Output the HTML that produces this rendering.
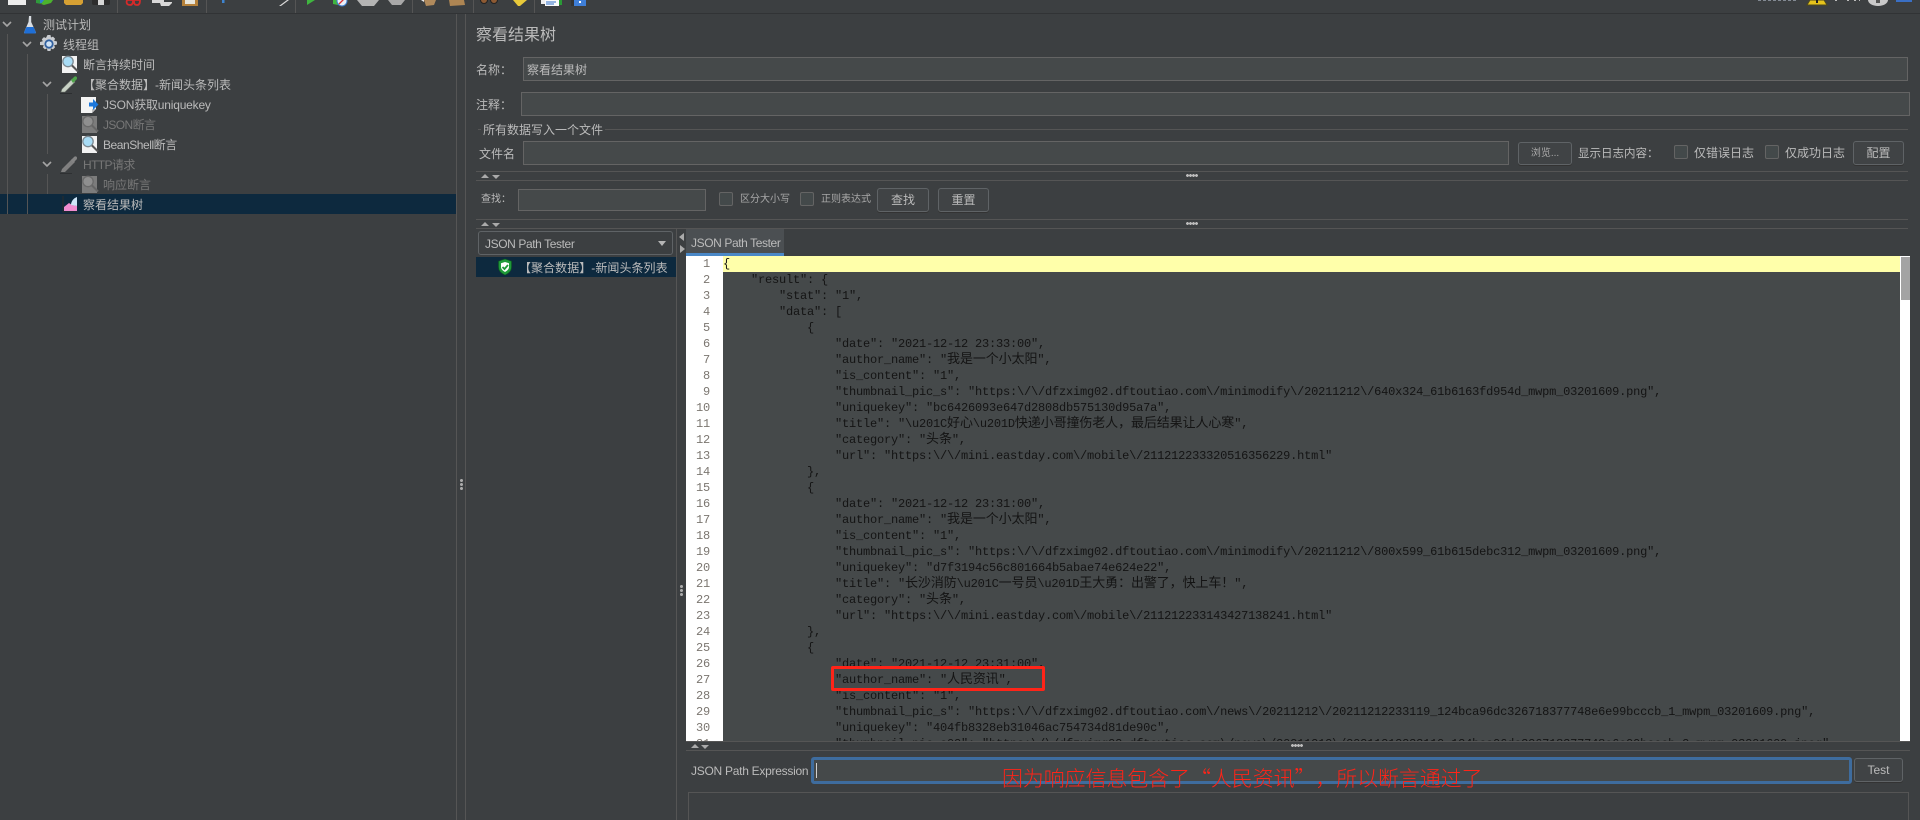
<!DOCTYPE html>
<html lang="zh-CN">
<head>
<meta charset="utf-8">
<title>察看结果树</title>
<style>
*{box-sizing:border-box}
html,body{margin:0;padding:0;width:1920px;height:820px;overflow:hidden;background:#3c3f41}
body{position:relative;font-family:"Liberation Sans","Noto Sans CJK SC",sans-serif;font-size:12px;color:#bbb;text-spacing-trim:space-all}
.t{position:absolute;white-space:nowrap;line-height:20px;height:20px;color:#bbb}
.d{color:#777}
.r{position:absolute}
.inp{position:absolute;background:#45494a;border:1px solid #646464}
.btn{position:absolute;background:#404345;border:1px solid #5f6366;border-radius:3px;box-shadow:0 1px 0 #333;color:#bbb;text-align:center;white-space:nowrap}
.cb{position:absolute;width:14px;height:14px;background:#43494a;border:1px solid #646464;border-radius:2px}
.line{position:absolute;height:1px;background:#555}
.vl{position:absolute;width:1px;background:#555}
.up,.dn{position:absolute;width:0;height:0;border-left:4px solid transparent;border-right:4px solid transparent}
.up{border-bottom:4px solid #aaa}
.dn{border-top:4px solid #aaa}
.dots{position:absolute;width:8px;height:3px;background:radial-gradient(circle at 1.5px 1.5px,#bbb 1.4px,transparent 1.5px) 0 0/3px 3px repeat-x}
.vdots{position:absolute;width:3px;height:11px;background:radial-gradient(circle at 1.5px 1.5px,#aaa 1.4px,transparent 1.6px) 0 0/4px 4px repeat-y}
svg{position:absolute;overflow:visible}
#gut{position:absolute;left:686px;top:256px;width:37px;height:485px;background:#fff;overflow:hidden;margin:0;padding:0 13px 0 0;text-align:right;font:12px/16px "Liberation Mono",monospace;letter-spacing:-.2px;color:#7b7670}
#code{position:absolute;left:723px;top:256px;width:1177px;height:485px;background:#45494a;overflow:hidden;font:12px/16px "Liberation Mono","Noto Sans CJK SC",monospace;letter-spacing:-.2px;color:#141414}
#code div{height:16px;line-height:16px;white-space:pre;padding-left:0;overflow:visible}
#code i,#code2 i{font-style:normal;font-family:"Noto Sans CJK SC",sans-serif;font-size:13px;letter-spacing:-.1px;line-height:0}
#code .first{background:#ffffaa}
#box{position:absolute;left:831px;top:666px;width:214px;height:25px;border:3px solid #ff2418;border-radius:2px;background:#45494a;z-index:0}
#code2{position:absolute;left:723px;top:672px;height:16px;font:12px/16px "Liberation Mono",monospace;letter-spacing:-.2px;color:#141414;white-space:pre}
.nar{letter-spacing:-.4px}
</style>
</head>
<body>

<!-- toolbar -->
<div class="r" style="left:0;top:0;width:1920px;height:14px;background:#3c3f41;border-bottom:1px solid #313335"></div>
<div class="vl" style="left:117px;top:0;height:13px"></div>
<div class="vl" style="left:206px;top:0;height:13px"></div>
<div class="vl" style="left:295px;top:0;height:13px"></div>
<div class="vl" style="left:412px;top:0;height:13px"></div>
<div class="vl" style="left:473px;top:0;height:13px"></div>
<div class="vl" style="left:534px;top:0;height:13px"></div>
<svg style="left:0;top:0" width="600" height="8" viewBox="0 0 600 8">
<rect x="8" y="0" width="18" height="5" fill="#ececec"/>
<path d="M36 0h5v4l-5-1z" fill="#2f9a3c"/><rect x="40" y="0" width="5" height="3" fill="#2f7fd0"/><path d="M44 0h9l-2 3-7 2-3-1z" fill="#4cb32e"/>
<path d="M64 0h19v3l-2 2H66l-2-2z" fill="#d6a033"/>
<path d="M92 0h18v4l-1 1H93l-1-1z" fill="#2d2d2d"/><rect x="98" y="0" width="6" height="5" fill="#d6d6d6"/>
<path d="M127 0c-1 3 0 5 3 5s3-3 3-5zM134 0c0 3 0 5 3 5s3-3 3-5z" fill="none" stroke="#d42a2a" stroke-width="1.8"/>
<path d="M152 0h12v2h8v1l-3 3h-8l-1-3h-8z" fill="#d8d8d8"/>
<path d="M182 0h16v6h-16z" fill="#b5813a"/><rect x="185" y="0" width="10" height="4" fill="#e8e6dc"/>
<rect x="222" y="0" width="2.5" height="3" fill="#3e84d0"/>
<path d="M279 6l8-6h2l-8 6z" fill="#d9d9d9"/>
<path d="M307 0h8l-8 5z" fill="#3fb53f"/>
<path d="M333 0h5v5l-5-1z" fill="#3fb53f"/><circle cx="342" cy="1" r="5" fill="#e8eef8" stroke="#3b78c9"/><path d="M339 4l6-6" stroke="#d33" stroke-width="1.3"/>
<path d="M357 0h22l-5 6h-12z" fill="#b4b4b4"/>
<path d="M388 0h17l-4 5h-9z" fill="#a8a8a8"/>
<path d="M424 0h12l-2 5-8 1z" fill="#b08a5c"/><path d="M421 0l3 0 0 2z" fill="#eee"/>
<path d="M449 0h15l1 5-15 1z" fill="#ad8553"/>
<circle cx="484" cy="0" r="3.5" fill="#8d5a33" stroke="#222"/><circle cx="494" cy="0" r="3.5" fill="#8d5a33" stroke="#222"/>
<path d="M513 0h14l-7 6h-2z" fill="#e8c93a"/>
<path d="M541 0h4v4h-4z" fill="#eee"/><rect x="545" y="0" width="14" height="6" fill="#fafafa"/><path d="M546 2h10M546 4h8" stroke="#2e6fc8"/><rect x="559" y="0" width="3" height="5" fill="#2a9a36"/>
<rect x="571" y="0" width="4" height="6" fill="#333"/><rect x="574" y="0" width="12" height="6" fill="#3f7fd8"/><rect x="579" y="1" width="2" height="2" fill="#fff"/>
</svg>
<svg style="left:1720px;top:0" width="200" height="8" viewBox="0 0 200 8">
<path d="M38 0h40" stroke="#9aa2ad" stroke-width="1.6" stroke-dasharray="3 2"/>
<path d="M87 5l3-5h14l3 5z" fill="#e6c31c" stroke="#4f4a1c"/><rect x="96" y="0" width="2" height="3" fill="#222"/>
<path d="M115 0h2M127 0h2M134 0h2M139 0h1" stroke="#bbb" stroke-width="2"/>
<path d="M148 0h20a10 6 0 0 1-20 0z" fill="#c9c9c9"/><rect x="156" y="0" width="4" height="3" fill="#555"/>
<path d="M176 0h16v2h-16z" fill="#3a6fc4"/>
</svg>

<!-- tree -->
<div class="r" style="left:0;top:194px;width:456px;height:20px;background:#0d293e"></div>
<div class="vl" style="left:7px;top:34px;height:180px"></div>
<div class="vl" style="left:27px;top:54px;height:160px"></div>
<div class="vl" style="left:47px;top:94px;height:60px"></div>
<div class="vl" style="left:47px;top:174px;height:20px"></div>
<svg style="left:0;top:0" width="60" height="180" viewBox="0 0 60 180" fill="none" stroke="#a5a5a5" stroke-width="1.6">
<path d="M3 22l4 4 4-4M23 42l4 4 4-4M43 82l4 4 4-4M43 162l4 4 4-4"/>
</svg>
<div class="t" style="left:43px;top:15px;font-size:12px">测试计划</div>
<div class="t" style="left:63px;top:35px">线程组</div>
<div class="t" style="left:83px;top:55px">断言持续时间</div>
<div class="t" style="left:83px;top:75px">【聚合数据】-新闻头条列表</div>
<div class="t" style="left:103px;top:95px;letter-spacing:-.2px">JSON获取uniquekey</div>
<div class="t d" style="left:103px;top:115px;letter-spacing:-.6px">JSON断言</div>
<div class="t" style="left:103px;top:135px;letter-spacing:-.45px">BeanShell断言</div>
<div class="t d" style="left:83px;top:155px;letter-spacing:-.6px">HTTP请求</div>
<div class="t d" style="left:103px;top:175px">响应断言</div>
<div class="t" style="left:83px;top:195px">察看结果树</div>

<!-- flask -->
<svg style="left:23px;top:15px" width="14" height="19" viewBox="0 0 14 19">
<path d="M6 1h2.2v6l4.6 10c.3.8-.2 1.5-1 1.5H2.2c-.8 0-1.300-.7-1-1.500L5.500 7z" fill="#d8dde2"/>
<path d="M3.500 12h7l2.300 5c.3.8-.2 1.500-1 1.500H2.200c-.8 0-1.300-.7-1-1.500z" fill="#1f6fd6"/>
</svg>
<!-- gear -->
<svg style="left:40px;top:35px" width="18" height="18" viewBox="0 0 18 18">
<path d="M7.500 0h3l.5 2.500 2-.9 2.100 2.100-1 2 2.900.8v3l-2.900.7 1 2.100-2.100 2.100-2-1-.5 2.600h-3l-.6-2.600-2 1-2.100-2.100 1-2.100L0 10V7l2.800-.8-1-2 2.100-2.100 2 .9z" fill="#c9ccd0"/>
<circle cx="9" cy="9" r="4.600" fill="#2f5f9e"/><circle cx="9" cy="9" r="2.800" fill="#cfe2f5"/>
</svg>
<!-- magnifier docs -->
<svg style="left:61px;top:55px" width="18" height="19" viewBox="0 0 18 19">
<rect x="1" y="1" width="15" height="17" fill="#f2f2f2"/><circle cx="7" cy="6.500" r="5.200" fill="#a8dcf5" stroke="#7d8a92" stroke-width="1.300"/><path d="M11 10.500l6 6" stroke="#555" stroke-width="2"/>
</svg>
<svg style="left:81px;top:135px" width="18" height="19" viewBox="0 0 18 19">
<rect x="1" y="1" width="15" height="17" fill="#f2f2f2"/><circle cx="7" cy="6.500" r="5.200" fill="#a8dcf5" stroke="#7d8a92" stroke-width="1.300"/><path d="M11 10.500l6 6" stroke="#555" stroke-width="2"/>
</svg>
<svg style="left:81px;top:115px" width="18" height="19" viewBox="0 0 18 19">
<rect x="1" y="1" width="15" height="17" fill="#7c7c7c"/><circle cx="7" cy="6.500" r="5.200" fill="#8f8f8f" stroke="#6a6a6a" stroke-width="1.300"/><path d="M11 10.500l6 6" stroke="#666" stroke-width="2"/>
</svg>
<svg style="left:81px;top:175px" width="18" height="19" viewBox="0 0 18 19">
<rect x="1" y="1" width="15" height="17" fill="#7c7c7c"/><circle cx="7" cy="6.500" r="5.200" fill="#8f8f8f" stroke="#6a6a6a" stroke-width="1.300"/><path d="M11 10.500l6 6" stroke="#666" stroke-width="2"/>
</svg>
<!-- droppers -->
<svg style="left:60px;top:75px" width="20" height="19" viewBox="0 0 20 19">
<path d="M1 17l1-3L12 4l3 3L5 17z" fill="#c9d2c6" stroke="#6c756b" stroke-width=".6"/><path d="M11 5l3-3c1-1 3-1 3 1 0 1-.2 1.500-1 2l-3 3z" fill="#4fa54a"/><path d="M0 18.500h12" stroke="#2c2e30"/>
</svg>
<svg style="left:60px;top:155px" width="20" height="19" viewBox="0 0 20 19">
<path d="M1 17l1-3L12 4l3 3L5 17z" fill="#808080"/><path d="M11 5l3-3c1-1 3-1 3 1 0 1-.2 1.500-1 2l-3 3z" fill="#858585"/><path d="M0 18.500h12" stroke="#2e3032"/>
</svg>
<!-- JSON extractor -->
<svg style="left:80px;top:95px" width="20" height="19" viewBox="0 0 20 19">
<path d="M1 2h15v12l-4 4H1z" fill="#f4f4f4"/><path d="M12 18v-4h4z" fill="#bdbdbd"/><path d="M9 7.500h4V4l5.500 5.500L13 15v-3.500H9z" fill="#1d78dc"/>
</svg>
<!-- chart -->
<svg style="left:62px;top:196px" width="17" height="17" viewBox="0 0 17 17">
<path d="M1 0v16h15" fill="none" stroke="#2b2b2b"/><path d="M2 15V11l5-4 3 2 5 1v5z" fill="#f08cd0"/><path d="M9 9c0-4 3-7 6-8v9z" fill="#cfe6f8"/>
</svg>

<!-- main vertical splitters -->
<div class="vl" style="left:456px;top:14px;height:806px"></div>
<div class="vl" style="left:465px;top:14px;height:806px"></div>
<div class="vdots" style="left:460px;top:479px"></div>

<!-- header -->
<div class="t" style="left:476px;top:26px;font-size:16px">察看结果树</div>
<div class="t" style="left:476px;top:60px">名称：</div>
<div class="inp" style="left:523px;top:57px;width:1385px;height:24px"></div>
<div class="t" style="left:527px;top:60px">察看结果树</div>
<div class="t" style="left:476px;top:95px">注释：</div>
<div class="inp" style="left:521px;top:92px;width:1389px;height:24px"></div>

<div class="line" style="left:478px;top:129px;width:3px"></div>
<div class="t" style="left:483px;top:120px">所有数据写入一个文件</div>
<div class="line" style="left:605px;top:129px;width:1303px"></div>
<div class="t" style="left:479px;top:144px">文件名</div>
<div class="inp" style="left:523px;top:141px;width:986px;height:24px"></div>
<div class="btn" style="left:1518px;top:142px;width:54px;height:23px;font-size:10px;line-height:21px;color:#aaa">浏览...</div>
<div class="t" style="left:1578px;top:144px;font-size:11.500px">显示日志内容：</div>
<div class="cb" style="left:1674px;top:145px"></div>
<div class="t" style="left:1694px;top:143px">仅错误日志</div>
<div class="cb" style="left:1765px;top:145px"></div>
<div class="t" style="left:1785px;top:143px">仅成功日志</div>
<div class="btn" style="left:1853px;top:141px;width:51px;height:24px;line-height:22px">配置</div>

<!-- splitter 1 -->
<div class="line" style="left:476px;top:171px;width:1432px"></div>
<div class="line" style="left:476px;top:180px;width:1432px"></div>
<div class="up" style="left:481px;top:174px"></div>
<div class="dn" style="left:492px;top:175px"></div>
<div class="dots" style="left:1186px;top:174px;width:12px;height:4px"></div>

<!-- search -->
<div class="t" style="left:481px;top:190px;font-size:10px">查找：</div>
<div class="inp" style="left:518px;top:189px;width:188px;height:22px"></div>
<div class="cb" style="left:719px;top:192px"></div>
<div class="t" style="left:740px;top:190px;font-size:10px;color:#a8a8a8">区分大小写</div>
<div class="cb" style="left:800px;top:192px"></div>
<div class="t" style="left:821px;top:190px;font-size:10px;color:#a8a8a8">正则表达式</div>
<div class="btn" style="left:877px;top:188px;width:52px;height:24px;line-height:23px">查找</div>
<div class="btn" style="left:938px;top:188px;width:51px;height:24px;line-height:23px">重置</div>

<!-- splitter 2 -->
<div class="line" style="left:476px;top:219px;width:1432px"></div>
<div class="line" style="left:476px;top:228px;width:1432px"></div>
<div class="up" style="left:481px;top:222px"></div>
<div class="dn" style="left:492px;top:223px"></div>
<div class="dots" style="left:1186px;top:222px;width:12px;height:4px"></div>

<!-- left result pane -->
<div class="btn nar" style="left:478px;top:231px;width:195px;height:24px;box-shadow:none;text-align:left;padding-left:6px;line-height:24px;background:#3c3f41">JSON Path Tester</div>
<div class="r" style="left:658px;top:241px;width:0;height:0;border-left:4.500px solid transparent;border-right:4.500px solid transparent;border-top:5px solid #b5b5b5"></div>
<div class="r" style="left:476px;top:257px;width:200px;height:20px;background:#0d293e"></div>
<svg style="left:498px;top:259px" width="14" height="16" viewBox="0 0 14 16">
<path d="M7 0l6.500 2.200V8c0 4-3 6.500-6.500 8C3.500 14.500.5 12 .5 8V2.200z" fill="#1f9a3a" stroke="#0e5a20" stroke-width=".6"/>
<path d="M7 3l4 1.300V8c0 2.200-2 3.800-4 5-2-1.200-4-2.800-4-5V4.300z" fill="#fff"/>
<path d="M4.500 8l2 2 3.500-4" fill="none" stroke="#1f9a3a" stroke-width="1.800"/>
</svg>
<div class="t" style="left:519px;top:258px;letter-spacing:.05px">【聚合数据】-新闻头条列表</div>

<div class="vl" style="left:676px;top:229px;height:591px"></div>
<div class="r" style="left:679px;top:233px;width:0;height:0;border-top:4px solid transparent;border-bottom:4px solid transparent;border-right:5px solid #aaa"></div>
<div class="r" style="left:680px;top:245px;width:0;height:0;border-top:4px solid transparent;border-bottom:4px solid transparent;border-left:5px solid #aaa"></div>
<div class="vdots" style="left:680px;top:585px"></div>

<!-- tab -->
<div class="r" style="left:686px;top:229px;width:98px;height:27px;background:#4b4f52;border-bottom:3px solid #4a88c7"></div>
<div class="t nar" style="left:691px;top:233px">JSON Path Tester</div>

<!-- gutter -->
<pre id="gut">1
2
3
4
5
6
7
8
9
10
11
12
13
14
15
16
17
18
19
20
21
22
23
24
25
26
27
28
29
30
31</pre>

<!-- code -->
<div id="code"><div class="first">{</div>
<div>    "result": {</div>
<div>        "stat": "1",</div>
<div>        "data": [</div>
<div>            {</div>
<div>                "date": "2021-12-12 23:33:00",</div>
<div>                "author_name": "<i>我是一个小太阳</i>",</div>
<div>                "is_content": "1",</div>
<div>                "thumbnail_pic_s": "https:\/\/dfzximg02.dftoutiao.com\/minimodify\/20211212\/640x324_61b6163fd954d_mwpm_03201609.png",</div>
<div>                "uniquekey": "bc6426093e647d2808db575130d95a7a",</div>
<div>                "title": "\u201C<i>好心</i>\u201D<i>快递小哥撞伤老人，最后结果让人心寒</i>",</div>
<div>                "category": "<i>头条</i>",</div>
<div>                "url": "https:\/\/mini.eastday.com\/mobile\/211212233320516356229.html"</div>
<div>            },</div>
<div>            {</div>
<div>                "date": "2021-12-12 23:31:00",</div>
<div>                "author_name": "<i>我是一个小太阳</i>",</div>
<div>                "is_content": "1",</div>
<div>                "thumbnail_pic_s": "https:\/\/dfzximg02.dftoutiao.com\/minimodify\/20211212\/800x599_61b615debc312_mwpm_03201609.png",</div>
<div>                "uniquekey": "d7f3194c56c801664b5abae74e624e22",</div>
<div>                "title": "<i>长沙消防</i>\u201C<i>一号员</i>\u201D<i>王大勇：出警了，快上车！</i>",</div>
<div>                "category": "<i>头条</i>",</div>
<div>                "url": "https:\/\/mini.eastday.com\/mobile\/211212233143427138241.html"</div>
<div>            },</div>
<div>            {</div>
<div>                "date": "2021-12-12 23:31:00",</div>
<div>&nbsp;</div>
<div>                "is_content": "1",</div>
<div>                "thumbnail_pic_s": "https:\/\/dfzximg02.dftoutiao.com\/news\/20211212\/20211212233119_124bca96dc326718377748e6e99bcccb_1_mwpm_03201609.png",</div>
<div>                "uniquekey": "404fb8328eb31046ac754734d81de90c",</div>
<div>                "thumbnail_pic_s02": "https:\/\/dfzximg02.dftoutiao.com\/news\/20211212\/20211212233119_124bca96dc326718377748e6e99bcccb_2_mwpm_03201609.jpeg",</div>
</div>

<!-- red annotation box -->
<div id="box"></div>
<div id="code2">                "author_name": "<i>人民资讯</i>",</div>

<!-- scrollbar -->
<div class="r" style="left:1900px;top:256px;width:10px;height:485px;background:#fff"></div>
<div class="r" style="left:1901px;top:257px;width:9px;height:43px;background:#a3a3a3"></div>

<!-- bottom splitter -->
<div class="r" style="left:686px;top:741px;width:1224px;height:1px;background:#555"></div>
<div class="line" style="left:686px;top:750px;width:1224px"></div>
<div class="up" style="left:691px;top:744px"></div>
<div class="dn" style="left:701px;top:745px"></div>
<div class="dots" style="left:1291px;top:744px;width:12px;height:4px"></div>

<!-- expression -->
<div class="t" style="left:691px;top:761px;letter-spacing:-.27px">JSON Path Expression</div>
<div class="r" style="left:811px;top:757px;width:1041px;height:27px;background:#45494a;border:3px solid #3e6c9e;border-radius:3px"></div>
<div class="r" style="left:816px;top:763px;width:1px;height:15px;background:#d0d0d0"></div>
<div class="btn" style="left:1854px;top:758px;width:49px;height:24px;line-height:22px">Test</div>
<div class="r" style="left:688px;top:792px;width:1221px;height:40px;border:1px solid #555"></div>

<div class="r" style="left:1002px;top:764px;line-height:28px;font-size:20.900px;color:#ff2418;white-space:nowrap;font-family:'Noto Sans CJK SC',sans-serif;font-weight:300;text-spacing-trim:space-all">因为响应信息包含了“人民资讯”，所以断言通过了</div>

</body>
</html>
